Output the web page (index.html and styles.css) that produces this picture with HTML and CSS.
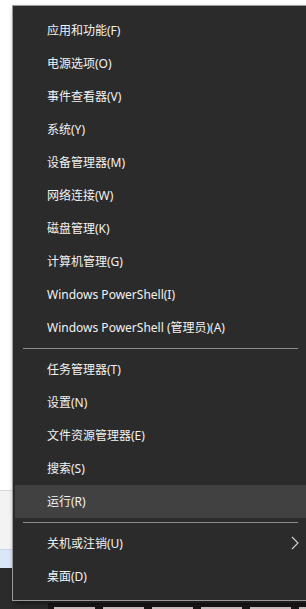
FILE: index.html
```html
<!DOCTYPE html>
<html>

<head>
    <title>Win+X menu</title>
    <link rel="stylesheet" href="styles.css">
</head>

<body>
    <!-- Desktop behind the menu -->
    <div class="desktop">
        <div class="win-white"></div>
        <div class="win-gray"></div>
        <div class="win-blue"></div>
        <div class="dark-area"></div>
        <div class="taskbar">
            <div class="taskbar-left"></div>
            <div class="taskbar-apps">
                <div class="tile"></div>
                <div class="tile"></div>
                <div class="tile"></div>
                <div class="tile"></div>
                <div class="tile"></div>
                <div class="tile"></div>
            </div>
        </div>
    </div>

    <!-- Quick link menu -->
    <div class="menu">
        <div class="item">应用和功能(F)</div>
        <div class="item">电源选项(O)</div>
        <div class="item">事件查看器(V)</div>
        <div class="item">系统(Y)</div>
        <div class="item">设备管理器(M)</div>
        <div class="item">网络连接(W)</div>
        <div class="item">磁盘管理(K)</div>
        <div class="item">计算机管理(G)</div>
        <div class="item">Windows PowerShell(I)</div>
        <div class="item">Windows PowerShell (管理员)(A)</div>
        <div class="separator"></div>
        <div class="item">任务管理器(T)</div>
        <div class="item">设置(N)</div>
        <div class="item">文件资源管理器(E)</div>
        <div class="item">搜索(S)</div>
        <div class="item hover">运行(R)</div>
        <div class="separator"></div>
        <div class="item has-sub">关机或注销(U)
            <svg class="chevron" width="8" height="14" viewBox="0 0 8 14">
                <path d="M1 1 L7 7 L1 13" fill="none" stroke="#cfd6dd" stroke-width="1.1"/>
            </svg>
        </div>
        <div class="item">桌面(D)</div>
    </div>
</body>

</html>
```

FILE: styles.css
```css
html, body {
    margin: 0;
    height: 100%;
    overflow: hidden;
}

body {
    font-family: "Noto Sans", "Noto Sans CJK SC", sans-serif;
    background-color: #2b2b2b;
}

/* Desktop backdrop */
.desktop {
    display: flex;
    flex-direction: column;
    height: 100%;
}
.win-white {
    height: 490px;
    background-color: #ffffff;
}
.win-gray {
    height: 58px;
    border-top: 1px solid #d9d9d9;
    background-color: #f3f3f3;
}
.win-blue {
    height: 18px;
    border-top: 1px solid #c9d6e6;
    background-color: #d9e7f7;
}
.dark-area {
    height: 35px;
    background-color: #2b2b2b;
}
.taskbar {
    flex: 1;
    display: flex;
}
.taskbar-left {
    width: 48px;
    flex-shrink: 0;
    background-color: #2b2b2b;
}
.taskbar-apps {
    flex: 1;
    display: flex;
    gap: 8px;
    padding: 4px 0 0 6px;
    overflow: hidden;
    background-color: #181616;
}
.tile {
    width: 41px;
    flex-shrink: 0;
    background-color: #cdbfc0;
}

/* Menu */
.menu {
    position: absolute;
    left: 12px;
    top: 5px;
    width: 300px;
    padding: 8px 0 7px 2px;
    background-color: #2b2b2b;
    border: 1px solid #9b9b9b;
    box-shadow: 2px 3px 5px rgba(0, 0, 0, 0.45);
}
.item {
    position: relative;
    height: 33px;
    line-height: 33px;
    padding-left: 32px;
    font-size: 12px;
    color: #f2f2f2;
    white-space: nowrap;
}
.item.hover {
    background-color: #414141;
}
.separator {
    height: 1px;
    margin: 4px 0 4px 8px;
    width: 275px;
    background-color: #8a8a8a;
}
.chevron {
    position: absolute;
    left: 276px;
    top: 9px;
}
```
